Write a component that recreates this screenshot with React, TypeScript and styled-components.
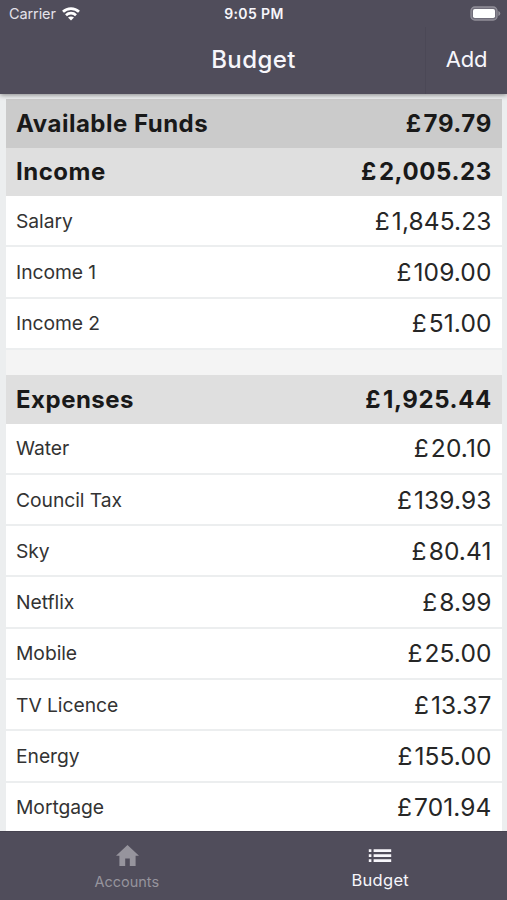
import React from 'react';
import styled, { createGlobalStyle } from 'styled-components';

const GlobalStyle = createGlobalStyle`
  * { box-sizing: border-box; }
  body { margin: 0; background: #eceeef; }
`;

const Screen = styled.div`
  display: flex;
  flex-direction: column;
  width: 507px;
  height: 900px;
  overflow: hidden;
  background: #eceeef;
  color: #1b1b1b;
  font-family: Inter, "Liberation Sans", sans-serif;
`;

const Header = styled.header`
  flex: none;
  height: 94px;
  background: #504d5b;
  color: #f7f6fb;
  box-shadow: 0 1px 5px rgba(0, 0, 0, 0.45);
  z-index: 1;
`;

const StatusBar = styled.div`
  display: grid;
  grid-template-columns: 1fr auto 1fr;
  align-items: center;
  height: 27px;
  padding: 0 6px 0 9px;
`;

const Carrier = styled.div`
  display: flex;
  align-items: center;
  gap: 6px;
  font-size: 14.5px;
  letter-spacing: -0.1px;
  color: #e4e2ea;
`;

const Clock = styled.div`
  margin-left: -2px;
  font-size: 14px;
  font-weight: 600;
  letter-spacing: 0.4px;
`;

const BatteryIcon = styled.svg`
  justify-self: end;
`;

const NavBar = styled.div`
  display: grid;
  grid-template-columns: 82px 1fr 82px;
  height: 67px;
`;

const Title = styled.h1`
  grid-column: 2;
  margin: 0;
  text-align: center;
  font-size: 24px;
  line-height: 66px;
  font-weight: 500;
  letter-spacing: 0.4px;
`;

const AddButton = styled.button`
  border: 0;
  border-left: 1px solid #4b4856;
  padding: 0 0 2px;
  background: none;
  color: inherit;
  font: 400 22px/65px Inter, sans-serif;
  letter-spacing: -0.2px;
`;

const List = styled.main`
  flex: 1;
  min-height: 0;
  overflow: hidden;
  padding: 5.2px 5px 0 6px;
`;

const SummaryRow = styled.div<{ $tone: string }>`
  display: flex;
  justify-content: space-between;
  align-items: center;
  height: 48.5px;
  padding: 0 10.5px 0 10px;
  background: ${(p) => p.$tone};
  font-size: 24px;
  color: #191919;
`;

const SummaryLabel = styled.span`
  font-weight: 650;
  letter-spacing: 0.5px;
`;

const SummaryAmount = styled.span`
  display: flex;
  font-weight: 650;
  letter-spacing: 0.6px;
  margin-right: -0.4px;
`;

const Currency = styled.span`
  margin-right: 2px;
`;

const Items = styled.div`
  background: #fff;
`;

const ItemRow = styled.div`
  display: flex;
  justify-content: space-between;
  align-items: center;
  height: 51.3px;
  padding: 0 10.5px 0 10px;
  border-bottom: 2.5px solid #eceeef;
`;

const ItemLabel = styled.span`
  font-size: 19.3px;
  letter-spacing: -0.05px;
  color: #333;
`;

const ItemAmount = styled.span`
  display: flex;
  font-size: 24.5px;
  letter-spacing: 0.1px;
  color: #262626;
`;

const Spacer = styled.div`
  height: 25px;
  background: #f4f4f4;
`;

const TabBar = styled.nav`
  flex: none;
  display: grid;
  grid-template-columns: 1fr 1fr;
  height: 69px;
  background: #504d5b;
  border-top: 1px solid #464350;
`;

const Tab = styled.div<{ $active?: boolean }>`
  display: flex;
  flex-direction: column;
  align-items: center;
  padding-top: 10px;
  color: ${(p) => (p.$active ? '#f7f6fb' : '#96949d')};
  font-size: ${(p) => (p.$active ? '16.5px' : '14.5px')};
  line-height: ${(p) => (p.$active ? '20px' : '23px')};
  letter-spacing: ${(p) => (p.$active ? '0.3px' : '0')};
`;

const TabIcon = styled.svg`
  display: block;
  margin-bottom: 2px;
  fill: currentColor;
`;

const income = [
  ['Salary', '1,845.23'],
  ['Income 1', '109.00'],
  ['Income 2', '51.00'],
];

const expenses = [
  ['Water', '20.10'],
  ['Council Tax', '139.93'],
  ['Sky', '80.41'],
  ['Netflix', '8.99'],
  ['Mobile', '25.00'],
  ['TV Licence', '13.37'],
  ['Energy', '155.00'],
  ['Mortgage', '701.94'],
];

function Summary({ label, amount, tone = '#dfdfdf' }: { label: string; amount: string; tone?: string }) {
  return (
    <SummaryRow $tone={tone}>
      <SummaryLabel>{label}</SummaryLabel>
      <SummaryAmount><Currency>£</Currency>{amount}</SummaryAmount>
    </SummaryRow>
  );
}

function ItemList({ rows }: { rows: string[][] }) {
  return (
    <Items>
      {rows.map(([label, amount]) => (
        <ItemRow key={label}>
          <ItemLabel>{label}</ItemLabel>
          <ItemAmount><Currency>£</Currency>{amount}</ItemAmount>
        </ItemRow>
      ))}
    </Items>
  );
}

export default function App() {
  return (
    <Screen>
      <GlobalStyle />
      <Header>
        <StatusBar>
          <Carrier>
            Carrier
            <svg width="18" height="14" viewBox="0 0 18 14" fill="none" stroke="#fff" strokeWidth="2.7">
              <path d="M1 4.8C5.4.5 12.6.5 17 4.8" />
              <path d="M4 8.2c2.8-2.7 7.2-2.7 10 0" />
              <path d="M9 13.5 6 10.5c1.7-1.5 4.3-1.5 6 0Z" fill="#fff" stroke="none" />
            </svg>
          </Carrier>
          <Clock>9:05 PM</Clock>
          <BatteryIcon width="31" height="15" viewBox="0 0 31 15">
            <rect x="1" y="1" width="26" height="13" rx="3.8" fill="#706d7a" stroke="#918f99" strokeWidth="1.3" />
            <rect x="3" y="3" width="22" height="9" rx="1.8" fill="#fff" />
            <path d="M28.3 5v5q2-.7 2-2.5T28.3 5Z" fill="#918f99" />
          </BatteryIcon>
        </StatusBar>
        <NavBar>
          <Title>Budget</Title>
          <AddButton>Add</AddButton>
        </NavBar>
      </Header>
      <List>
        <Summary label="Available Funds" amount="79.79" tone="#cbcbcb" />
        <Summary label="Income" amount="2,005.23" />
        <ItemList rows={income} />
        <Spacer />
        <Summary label="Expenses" amount="1,925.44" />
        <ItemList rows={expenses} />
      </List>
      <TabBar>
        <Tab>
          <TabIcon width="24" height="26" viewBox="0 0 24 26">
            <path d="M12.5 3 1 13.8h3.4V24h5.8v-7.4h4.6V24h5.8V13.8H24Z" />
          </TabIcon>
          Accounts
        </Tab>
        <Tab $active>
          <TabIcon width="24" height="26" viewBox="0 0 24 26">
            <path d="M.8 7.2h2.6v2.7H.8zM5.6 7.2h17.6v2.7H5.6zM.8 12.3h2.6V15H.8zM5.6 12.3h17.6V15H5.6zM.8 17.3h2.6V20H.8zM5.6 17.3h17.6V20H5.6z" />
          </TabIcon>
          Budget
        </Tab>
      </TabBar>
    </Screen>
  );
}
